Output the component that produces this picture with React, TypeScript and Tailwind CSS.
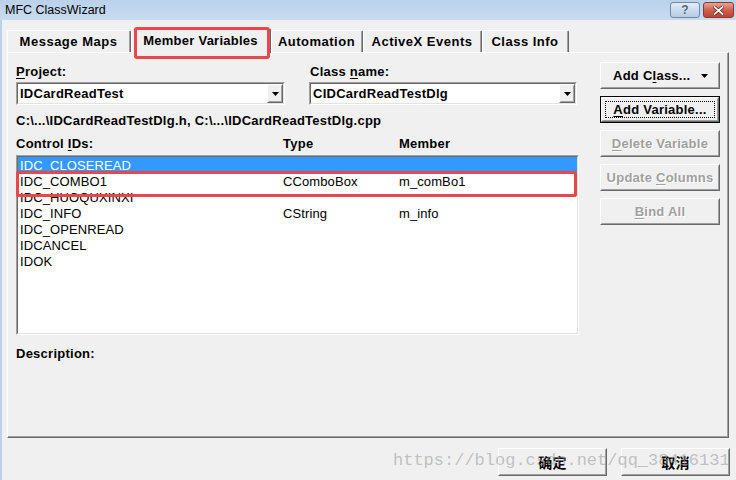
import React from "react";

type P = { className?: string; innerClassName?: string; children?: React.ReactNode };

function Raised({ className = "", innerClassName = "", children }: P) {
  return (
    <div className={`border border-t-white border-l-white border-r-[#696969] border-b-[#696969] bg-[#f0f0f0] ${className}`}>
      <div className={`h-full w-full border border-t-[#f0f0f0] border-l-[#f0f0f0] border-r-[#a0a0a0] border-b-[#a0a0a0] ${innerClassName}`}>
        {children}
      </div>
    </div>
  );
}

function Sunken({ className = "", innerClassName = "", children }: P) {
  return (
    <div className={`border border-t-[#a0a0a0] border-l-[#a0a0a0] border-r-white border-b-white ${className}`}>
      <div className={`h-full w-full border border-t-[#696969] border-l-[#696969] border-r-[#e3e3e3] border-b-[#e3e3e3] bg-white ${innerClassName}`}>
        {children}
      </div>
    </div>
  );
}

function Tri() {
  return (
    <svg width="7" height="4" viewBox="0 0 7 4">
      <polygon points="0,0 7,0 3.5,4" fill="#000" />
    </svg>
  );
}

function U({ children }: { children: React.ReactNode }) {
  return <span className="underline decoration-1 underline-offset-[2px]">{children}</span>;
}

function Combo({ text, className }: { text: string; className: string }) {
  return (
    <Sunken className={`h-[23px] ${className}`} innerClassName="flex items-center justify-between pl-[2px]">
      <span className="pt-px font-bold">{text}</span>
      <Raised className="h-[19px] w-[16px] shrink-0" innerClassName="flex items-center justify-center">
        <Tri />
      </Raised>
    </Sunken>
  );
}

function Tab({ label, className, selected }: { label: string; className: string; selected?: boolean }) {
  if (selected) {
    return (
      <div className={`relative z-10 -mb-px h-[25px] rounded-t-[2px] border-l border-t border-r border-l-white border-t-white border-r-[#696969] bg-[#f0f0f0] ${className}`}>
        <div className="flex h-full w-full items-center justify-center border-r border-r-[#a0a0a0] font-bold">{label}</div>
      </div>
    );
  }
  return (
    <div className={`h-[22px] rounded-t-[2px] border-l border-t border-r border-l-white border-t-white border-r-[#696969] bg-[#f0f0f0] ${className}`}>
      <div className="flex h-full w-full items-center justify-center border-r border-r-[#a0a0a0] pt-px font-bold tracking-[0.5px]">{label}</div>
    </div>
  );
}

function Btn({ children, disabled, className = "" }: { children: React.ReactNode; disabled?: boolean; className?: string }) {
  return (
    <Raised className={`h-[27px] w-[120px] ${className}`} innerClassName="flex items-center justify-center">
      <span
        className={disabled ? "font-bold text-[#a0a0a0] [text-shadow:1px_1px_0_#ffffff]" : "font-bold text-black"}
      >
        {children}
      </span>
    </Raised>
  );
}

const rows: { id: string; type?: string; member?: string; sel?: boolean }[] = [
  { id: "IDC_CLOSEREAD", sel: true },
  { id: "IDC_COMBO1", type: "CComboBox", member: "m_comBo1" },
  { id: "IDC_HUOQUXINXI" },
  { id: "IDC_INFO", type: "CString", member: "m_info" },
  { id: "IDC_OPENREAD" },
  { id: "IDCANCEL" },
  { id: "IDOK" },
];

export default function App() {
  return (
    <div className="relative flex h-[480px] w-[736px] flex-col overflow-hidden bg-[#f0f0f0] font-['Liberation_Sans',Arial,sans-serif] text-[13px] leading-[16px] tracking-[0.25px] text-black">
      {/* Title bar */}
      <div className="flex h-[20px] shrink-0 items-start justify-between bg-gradient-to-b from-[#bad1ea] to-[#c8dcf1]">
        <div className="pl-[5px] pt-[3px] text-[12.5px] leading-[14px] tracking-normal">MFC ClassWizard</div>
        <div className="flex gap-[3px] pr-[2px] pt-[2px]">
          <div className="flex h-[16px] w-[30px] items-center justify-center rounded-[3px] border border-[#7089a8] bg-gradient-to-b from-[#e3ecf7] to-[#b5cbe4] text-[12px] font-bold leading-[12px] text-[#4f5f75] [text-shadow:0_0_1px_#ffffff]">
            ?
          </div>
          <div className="flex h-[16px] w-[31px] items-center justify-center rounded-[3px] border border-[#8a3a30] bg-gradient-to-b from-[#e6a496] via-[#d0604e] to-[#c2412e]">
            <svg width="11" height="9" viewBox="0 0 11 9">
              <path d="M1.5 1 L9.5 8 M9.5 1 L1.5 8" stroke="#5a1d15" strokeWidth="3.2" strokeLinecap="square" />
              <path d="M1.5 1 L9.5 8 M9.5 1 L1.5 8" stroke="#ffffff" strokeWidth="1.8" strokeLinecap="square" />
            </svg>
          </div>
        </div>
      </div>

      {/* Body */}
      <div className="flex flex-1 flex-col border-l-2 border-l-[#b9d1ea] pl-[5px] pt-[8px]">
        {/* Tabs */}
        <div className="flex h-[24px] items-end">
          <Tab label="Message Maps" className="w-[124px]" />
          <Tab label="Member Variables" className="w-[140px]" selected />
          <Tab label="Automation" className="w-[92px]" />
          <Tab label="ActiveX Events" className="w-[119px]" />
          <Tab label="Class Info" className="w-[87px]" />
        </div>

        {/* Panel */}
        <div className="h-[386px] w-[722px] border-l border-t border-r border-b border-l-white border-t-white border-r-[#696969] border-b-[#696969]">
          <div className="flex h-full w-full border-r border-b border-r-[#a0a0a0] border-b-[#a0a0a0] pl-[8px]">
            {/* Left column */}
            <div className="flex w-[563px] flex-col pt-[11px]">
              <div className="flex h-[16px]">
                <div className="w-[293px] font-bold">
                  <U>P</U>roject:
                </div>
                <div className="pl-px font-bold">
                  Class <U>n</U>ame:
                </div>
              </div>
              <div className="mt-[2px] flex gap-[24px]">
                <Combo text="IDCardReadTest" className="w-[269px]" />
                <Combo text="CIDCardReadTestDlg" className="w-[268px]" />
              </div>
              <div className="mt-[8px] h-[16px] font-bold">C:\...\IDCardReadTestDlg.h, C:\...\IDCardReadTestDlg.cpp</div>
              <div className="mt-[7px] flex h-[16px] font-bold">
                <div className="w-[267px]">
                  Control <U>I</U>Ds:
                </div>
                <div className="w-[116px]">Type</div>
                <div>Member</div>
              </div>
              <Sunken className="mt-[3px] h-[180px] w-[563px]">
                {rows.map((r) => (
                  <div
                    key={r.id}
                    className={r.sel ? "flex h-[16px] bg-[#3399ff] pl-[2px] pt-px text-white" : "flex h-[16px] pl-[2px] pt-px"}
                  >
                    <div className="w-[263px] tracking-[0.1px]">{r.id}</div>
                    <div className="w-[116px] tracking-[0.1px]">{r.type ?? ""}</div>
                    <div className="tracking-[0.1px]">{r.member ?? ""}</div>
                  </div>
                ))}
              </Sunken>
              <div className="mt-[11px] h-[16px] font-bold">Description:</div>
            </div>

            {/* Right column */}
            <div className="ml-[21px] flex w-[120px] flex-col gap-[7px] pt-[9px]">
              <Raised className="h-[27px] w-[120px]" innerClassName="flex items-center justify-between pl-[11px] pr-[10px]">
                <span className="font-bold">
                  Add C<U>l</U>ass...
                </span>
                <Tri />
              </Raised>
              <div className="h-[27px] w-[120px] border border-black">
                <Raised className="h-full w-full" innerClassName="p-[2px]">
                  <div className="flex h-full w-full items-center justify-center border border-dotted border-black font-bold">
                    <span>
                      <U>A</U>dd Variable...
                    </span>
                  </div>
                </Raised>
              </div>
              <Btn disabled>
                <U>D</U>elete Variable
              </Btn>
              <Btn disabled>
                Update <U>C</U>olumns
              </Btn>
              <Btn disabled>
                <U>B</U>ind All
              </Btn>
            </div>
          </div>
        </div>

        {/* Bottom buttons */}
        <div className="mt-[10px] flex justify-end gap-[14px] pr-[6px]">
          <Raised className="h-[28px] w-[109px]" innerClassName="flex items-center justify-center">
            <span className="font-['Noto_Sans_CJK_SC',sans-serif] text-[14px] font-bold">确定</span>
          </Raised>
          <Raised className="h-[28px] w-[109px]" innerClassName="flex items-center justify-center">
            <span className="font-['Noto_Sans_CJK_SC',sans-serif] text-[14px] font-bold">取消</span>
          </Raised>
        </div>
      </div>

      {/* Annotations */}
      <div className="pointer-events-none absolute left-[134px] top-[27px] z-20 h-[32px] w-[136px] rounded-[3px] border-[3px] border-[#e8474b]" />
      <div className="pointer-events-none absolute left-[16px] top-[171px] z-20 h-[26px] w-[561px] rounded-[2px] border-[3px] border-[#e8474b]" />

      {/* Watermark */}
      <div className="pointer-events-none absolute left-[393px] top-[451px] z-20 font-['Liberation_Mono',monospace] text-[17px] leading-[20px] tracking-normal text-[rgba(150,150,150,0.55)]">
        https://blog.csdn.net/qq_38416131
      </div>
    </div>
  );
}
